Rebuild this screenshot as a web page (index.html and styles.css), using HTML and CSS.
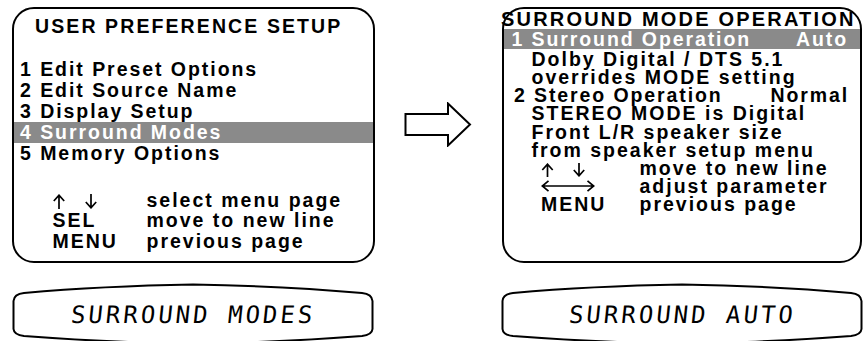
FILE: index.html
```html
<!DOCTYPE html>
<html lang="en">
<head>
<meta charset="utf-8">
<title>Surround Mode Setup</title>
<link rel="stylesheet" href="styles.css">
</head>
<body>
<div class="page">
  <div class="screens">
    <section class="osd osd-left">
      <h1 class="osd-title">USER PREFERENCE SETUP</h1>
      <ul class="menu">
        <li>1 Edit Preset Options</li>
        <li>2 Edit Source Name</li>
        <li>3 Display Setup</li>
        <li class="sel">4 Surround Modes</li>
        <li>5 Memory Options</li>
      </ul>
      <div class="legend legend-left">
        <span class="key">
          <svg class="ico-updown" width="45" height="15" viewBox="0 0 45 15" aria-label="up down">
            <path d="M6 1.5 V15 M0.8 7 L6 1.2 L11.2 7" fill="none" stroke="#000" stroke-width="1.7"/>
            <path d="M38 0 V13.5 M32.8 8 L38 13.8 L43.2 8" fill="none" stroke="#000" stroke-width="1.7"/>
          </svg>
        </span><span>select menu page</span>
        <span class="key">SEL</span><span>move to new line</span>
        <span class="key">MENU</span><span>previous page</span>
      </div>
    </section>

    <svg class="flow-arrow" width="68" height="45" viewBox="0 0 68 45" aria-hidden="true">
      <path d="M1.5 12 H44 V1.5 L66 22.5 L44 43.5 V33 H1.5 Z" fill="#fff" stroke="#000" stroke-width="2"/>
    </svg>

    <section class="osd osd-right">
      <h1 class="osd-title-r">SURROUND MODE OPERATION</h1>
      <div class="opt sel"><span>1 Surround Operation</span><span>Auto</span></div>
      <div class="opt-body">
        <div class="ind">Dolby Digital / DTS 5.1</div>
        <div class="ind">overrides MODE setting</div>
        <div class="opt opt2"><span>2 Stereo Operation</span><span>Normal</span></div>
        <div class="ind">STEREO MODE is Digital</div>
        <div class="ind">Front L/R speaker size</div>
        <div class="ind">from speaker setup menu</div>
        <div class="legend legend-right">
          <span class="key">
            <svg class="ico-updown-r" width="46" height="14" viewBox="0 0 46 14" aria-label="up down">
              <path d="M6.5 1.5 V14 M1.3 7 L6.5 1.2 L11.7 7" fill="none" stroke="#000" stroke-width="1.7"/>
              <path d="M38 0 V12.5 M32.8 7 L38 12.8 L43.2 7" fill="none" stroke="#000" stroke-width="1.7"/>
            </svg>
          </span><span>move to new line</span>
          <span class="key">
            <svg class="ico-leftright" width="54" height="12" viewBox="0 0 54 12" aria-label="left right">
              <path d="M1 6 H53 M7.5 0.8 L1.3 6 L7.5 11.2 M46.5 0.8 L52.7 6 L46.5 11.2" fill="none" stroke="#000" stroke-width="1.7"/>
            </svg>
          </span><span>adjust parameter</span>
          <span class="key">MENU</span><span>previous page</span>
        </div>
      </div>
    </section>
  </div>

  <div class="displays">
    <div class="lcd lcd-left">
      <svg class="lcd-frame" width="362" height="64" viewBox="0 0 362 64" preserveAspectRatio="none" aria-hidden="true">
        <path d="M181 1.5 Q90 3 12 10 Q2 11 1.5 18 L1.5 46 Q2 52 12 53 Q90 59 181 61 Q272 59 350 53 Q360 52 360.5 46 L360.5 18 Q360 11 350 10 Q272 3 181 1.5 Z" fill="none" stroke="#000" stroke-width="2"/>
      </svg>
      <span class="lcd-text">SURROUND MODES</span>
    </div>
    <div class="lcd lcd-right">
      <svg class="lcd-frame" width="362" height="64" viewBox="0 0 362 64" preserveAspectRatio="none" aria-hidden="true">
        <path d="M181 1.5 Q90 3 12 10 Q2 11 1.5 18 L1.5 46 Q2 52 12 53 Q90 59 181 61 Q272 59 350 53 Q360 52 360.5 46 L360.5 18 Q360 11 350 10 Q272 3 181 1.5 Z" fill="none" stroke="#000" stroke-width="2"/>
      </svg>
      <span class="lcd-text">SURROUND AUTO</span>
    </div>
  </div>
</div>
</body>
</html>
```

FILE: styles.css
```css
html, body {
  margin: 0;
  padding: 0;
  background: #fff;
}
body {
  width: 863px;
  height: 341px;
  overflow: hidden;
  font-family: "Liberation Sans", Arial, Helvetica, sans-serif;
  font-weight: bold;
  color: #000;
}
.page {
  display: flex;
  flex-direction: column;
}
.screens {
  display: flex;
  align-items: flex-start;
  padding-top: 7px;
}
.osd {
  box-sizing: border-box;
  height: 256px;
  border: 2.5px solid #000;
  border-radius: 22px;
  font-size: 19.5px;
}
.osd-left {
  width: 363px;
  margin-left: 12px;
}
.osd-right {
  width: 360px;
  margin-left: 30px;
}
.flow-arrow {
  flex: none;
  margin-left: 29px;
  margin-top: 95px;
}
.osd-title {
  margin: 7.25px 0 0 21px;
  font-size: 19.5px;
  line-height: 21px;
  letter-spacing: 2.1px;
  white-space: nowrap;
}
.menu {
  list-style: none;
  margin: 22px 0 0;
  padding: 0;
  line-height: 21px;
  letter-spacing: 1.95px;
}
.menu li {
  padding-left: 6px;
  white-space: nowrap;
}
.sel {
  background: #8a8a8a;
  color: #fff;
}
.legend {
  display: grid;
  letter-spacing: 2px;
  white-space: nowrap;
}
.legend-left {
  margin-top: 25.25px;
  padding-left: 38.5px;
  grid-template-columns: 94px auto;
  line-height: 20.5px;
}
.ico-updown {
  vertical-align: -2px;
}
.ico-updown-r {
  vertical-align: -2px;
}
.ico-leftright {
  vertical-align: 1px;
}
.osd-title-r {
  margin: 1.4px 0 0 -3px;
  font-size: 20px;
  line-height: 19px;
  letter-spacing: 2.2px;
  white-space: nowrap;
}
.opt {
  display: flex;
  justify-content: space-between;
  white-space: nowrap;
  letter-spacing: 1.9px;
}
.opt.sel {
  padding: 1px 12px 0 7.5px;
  line-height: 18.3px;
}
.opt-body {
  padding-top: 1.5px;
  line-height: 18.1px;
  letter-spacing: 2px;
}
.opt2 {
  padding: 0 11px 0 10px;
}
.ind {
  padding-left: 27.5px;
  white-space: nowrap;
}
.legend-right {
  padding-left: 37px;
  grid-template-columns: 98.5px auto;
}
.displays {
  display: flex;
  margin-top: 20px;
}
.lcd {
  position: relative;
  flex: none;
  width: 362px;
  height: 64px;
  display: flex;
  align-items: flex-start;
  justify-content: center;
}
.lcd-left {
  margin-left: 12px;
}
.lcd-right {
  margin-left: 127px;
}
.lcd-frame {
  position: absolute;
  left: 0;
  top: 0;
}
.lcd-text {
  position: relative;
  margin-top: 18px;
  font-family: "DejaVu Sans Mono", "Liberation Mono", monospace;
  font-weight: normal;
  font-size: 24px;
  line-height: 28px;
  letter-spacing: 3px;
  transform: skewX(-6deg);
  white-space: nowrap;
}
```
